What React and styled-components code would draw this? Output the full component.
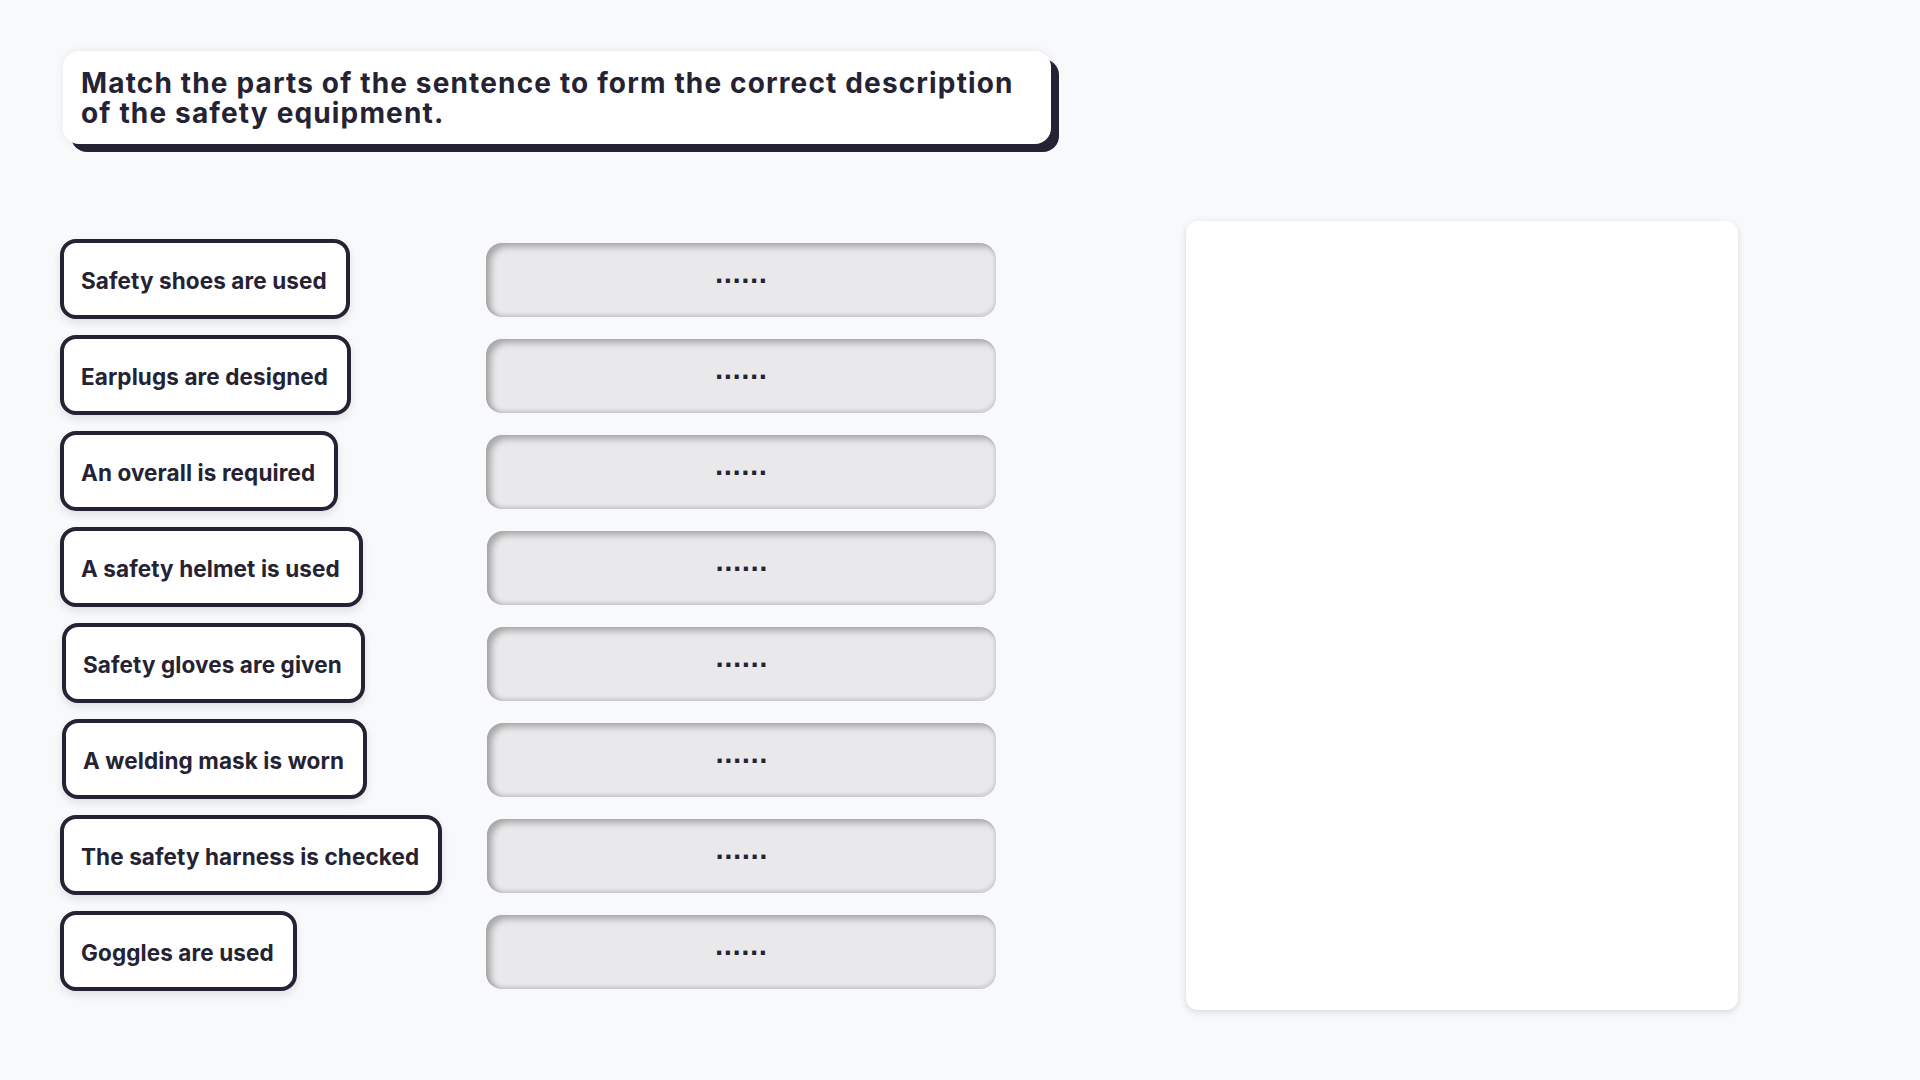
import React from 'react'
import styled, {createGlobalStyle} from 'styled-components'

const GlobalStyle = createGlobalStyle`
  html, body {
    margin: 0;
    padding: 0;
    background: #f8f9fb;
  }
  body {
    font-family: Inter, "Noto Sans", "Liberation Sans", sans-serif;
    color: #252333;
  }
`

const Page = styled.div`
  width: 1920px;
  height: 1080px;
  box-sizing: border-box;
  padding: 51px 0 0 60px;
  overflow: hidden;
`

const TitleCard = styled.div`
  width: 988px;
  box-sizing: border-box;
  margin-left: 3px;
  padding: 17px 19px 16px 18px;
  background: #fff;
  border-radius: 16px;
  box-shadow: 8px 8px 0 #252333, 0 0 8px rgba(0, 0, 0, 0.08);
`

const Title = styled.h1`
  margin: 0;
  font-size: 28px;
  line-height: 30px;
  font-weight: 700;
  letter-spacing: 1.15px;
`

const Board = styled.div`
  display: flex;
  align-items: flex-start;
  margin-top: 77px;
`

const Rows = styled.div`
  display: grid;
  grid-template-columns: 426px 510px;
  grid-auto-rows: 80px;
  row-gap: 16px;
  padding-top: 18px;
`

const Prompt = styled.div`
  justify-self: start;
  align-self: center;
  display: flex;
  align-items: center;
  height: 80px;
  box-sizing: border-box;
  margin-left: ${p => p.$shift || 0}px;
  padding: 2px 19px 0 17px;
  background: #fff;
  border: 4px solid #252333;
  border-radius: 16px;
  box-shadow: 0 4px 8px rgba(0, 0, 0, 0.1);
  font-size: 22.5px;
  font-weight: 700;
  letter-spacing: 0.1px;
  white-space: nowrap;
`

const DropZone = styled.div`
  align-self: center;
  display: flex;
  align-items: center;
  justify-content: center;
  height: 74px;
  margin-top: 2px;
  margin-left: ${p => p.$shift || 0}px;
  background: #e9e9eb;
  border-radius: 16px;
  box-shadow: inset 5px 4px 6px rgba(0, 0, 0, 0.28), inset -1px -2px 4px rgba(0, 0, 0, 0.14);
`

const Dots = styled.span`
  font-family: "DejaVu Sans", "Liberation Sans", sans-serif;
  font-size: 23px;
  line-height: 1;
  font-weight: 700;
  transform: translateY(-5px);
`

const AnswerPanel = styled.div`
  width: 552px;
  height: 789px;
  margin-left: 190px;
  background: #fff;
  border-radius: 12px;
  box-shadow: 0 2px 7px rgba(0, 0, 0, 0.14);
`

const prompts = [
    {text: 'Safety shoes are used'},
    {text: 'Earplugs are designed'},
    {text: 'An overall is required'},
    {text: 'A safety helmet is used', zone: 1},
    {text: 'Safety gloves are given', shift: 2, zone: 1},
    {text: 'A welding mask is worn', shift: 2, zone: 1},
    {text: 'The safety harness is checked', zone: 1},
    {text: 'Goggles are used'},
]

const App = () => {
    return (
        <>
            <GlobalStyle/>
            <Page>
                <TitleCard>
                    <Title>Match the parts of the sentence to form the correct description of the safety equipment.</Title>
                </TitleCard>
                <Board>
                    <Rows>
                        {prompts.map((p, i) => (
                            <React.Fragment key={i}>
                                <Prompt $shift={p.shift}>{p.text}</Prompt>
                                <DropZone $shift={p.zone}><Dots>......</Dots></DropZone>
                            </React.Fragment>
                        ))}
                    </Rows>
                    <AnswerPanel/>
                </Board>
            </Page>
        </>
    )
}

export default App
